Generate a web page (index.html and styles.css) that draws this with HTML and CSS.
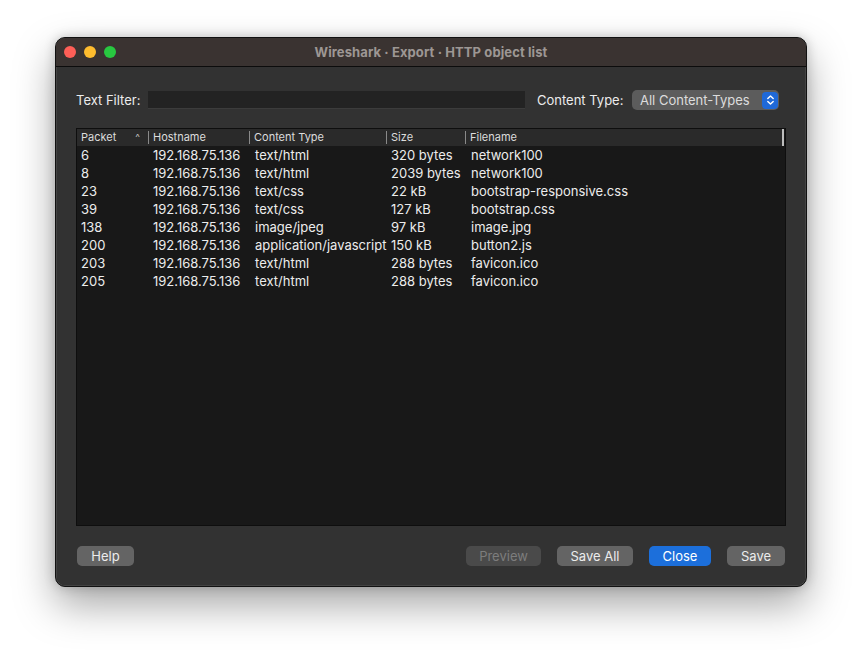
FILE: index.html
```html
<!DOCTYPE html>
<html>
<head>
<meta charset="utf-8">
<link rel="stylesheet" href="styles.css">
</head>
<body>
<div class="window">
  <div class="titlebar">
    <div class="lights">
      <span class="light red"></span>
      <span class="light yellow"></span>
      <span class="light green"></span>
    </div>
    <div class="title">Wireshark · Export · HTTP object list</div>
  </div>
  <div class="content">
    <div class="filters">
      <span class="label tf">Text Filter:</span>
      <div class="input"></div>
      <span class="label ct">Content Type:</span>
      <div class="select">
        <span class="select-text">All Content-Types</span>
        <span class="select-btn">
          <svg width="9" height="12" viewBox="0 0 9 12"><path d="M1.8 4.6 L4.5 1.9 L7.2 4.6 M1.8 7.4 L4.5 10.1 L7.2 7.4" fill="none" stroke="#fff" stroke-width="1.4" stroke-linecap="round" stroke-linejoin="round"/></svg>
        </span>
      </div>
    </div>
    <div class="table">
      <div class="thead">
        <div class="th c1">Packet <span class="sort">^</span></div>
        <div class="th c2">Hostname</div>
        <div class="th c3">Content Type</div>
        <div class="th c4">Size</div>
        <div class="th c5">Filename</div>
      </div>
      <div class="row"><span class="c1">6</span><span class="c2">192.168.75.136</span><span class="c3">text/html</span><span class="c4">320 bytes</span><span class="c5">network100</span></div>
      <div class="row"><span class="c1">8</span><span class="c2">192.168.75.136</span><span class="c3">text/html</span><span class="c4">2039 bytes</span><span class="c5">network100</span></div>
      <div class="row"><span class="c1">23</span><span class="c2">192.168.75.136</span><span class="c3">text/css</span><span class="c4">22 kB</span><span class="c5">bootstrap-responsive.css</span></div>
      <div class="row"><span class="c1">39</span><span class="c2">192.168.75.136</span><span class="c3">text/css</span><span class="c4">127 kB</span><span class="c5">bootstrap.css</span></div>
      <div class="row"><span class="c1">138</span><span class="c2">192.168.75.136</span><span class="c3">image/jpeg</span><span class="c4">97 kB</span><span class="c5">image.jpg</span></div>
      <div class="row"><span class="c1">200</span><span class="c2">192.168.75.136</span><span class="c3">application/javascript</span><span class="c4">150 kB</span><span class="c5">button2.js</span></div>
      <div class="row"><span class="c1">203</span><span class="c2">192.168.75.136</span><span class="c3">text/html</span><span class="c4">288 bytes</span><span class="c5">favicon.ico</span></div>
      <div class="row"><span class="c1">205</span><span class="c2">192.168.75.136</span><span class="c3">text/html</span><span class="c4">288 bytes</span><span class="c5">favicon.ico</span></div>
    </div>
    <div class="buttons">
      <button class="btn help">Help</button>
      <div class="spacer"></div>
      <button class="btn preview" disabled>Preview</button>
      <button class="btn saveall">Save All</button>
      <button class="btn close">Close</button>
      <button class="btn save">Save</button>
    </div>
  </div>
</div>
</body>
</html>
```
FILE: styles.css
```css
* { box-sizing: border-box; }
html, body { margin: 0; padding: 0; }
body {
  background: #ffffff;
  width: 862px;
  height: 660px;
  padding: 37px 0 0 55px;
  font-family: "Inter", "Liberation Sans", sans-serif;
  color: #e6e6e6;
}
.window {
  width: 752px;
  height: 550px;
  border: 1px solid #111;
  border-radius: 10px;
  background: #323232;
  overflow: hidden;
  box-shadow: 0 0 0 0.5px #555 inset, 0 18px 40px rgba(0,0,0,0.35), 0 0 12px rgba(0,0,0,0.2);
  display: flex;
  flex-direction: column;
}
.titlebar {
  height: 29px;
  background: #3a3331;
  border-bottom: 1px solid #0c0c0c;
  display: flex;
  align-items: center;
  position: relative;
}
.lights {
  display: flex;
  gap: 8px;
  padding-left: 8px;
}
.light {
  width: 12px;
  height: 12px;
  border-radius: 50%;
}
.red { background: #fe5f57; }
.yellow { background: #febc2e; }
.green { background: #28c840; }
.title {
  position: absolute;
  left: 0; right: 0; top: 0; bottom: 0;
  display: flex;
  align-items: center;
  justify-content: center;
  font-size: 13px;
  font-weight: 700;
  color: #9d9794;
  letter-spacing: 0.1px;
}
.content {
  flex: 1;
  display: flex;
  flex-direction: column;
  padding: 23px 20px 19px 20px;
}
.filters {
  display: flex;
  align-items: center;
  height: 20px;
  font-size: 13px;
}
.label { color: #ececec; white-space: nowrap; }
.tf { width: 72px; }
.input {
  width: 377px;
  height: 18px;
  background: #232323;
  border-bottom: 1px solid #3c3c3c;
}
.ct { margin-left: 12px; width: 95px; }
.select {
  width: 147px;
  height: 20px;
  border-radius: 5px;
  background: #5c5c5c;
  display: flex;
  align-items: center;
  justify-content: space-between;
  padding: 0 1px 0 8px;
}
.select-text { color: #dcdcdc; }
.select-btn {
  width: 16px;
  height: 17px;
  border-radius: 4px;
  background: #1f69d8;
  display: flex;
  align-items: center;
  justify-content: center;
}
.table {
  margin-top: 18px;
  height: 398px;
  background: #181818;
  border: 1px solid #0e0e0e;
  font-size: 13px;
}
.thead {
  display: flex;
  height: 17px;
  background: #2a2a2a;
  font-size: 11px;
  color: #dcdcdc;
  align-items: center;
  border-right: 2px solid #bdbdbd;
  margin-right: 1px;
}
.th {
  height: 13px;
  line-height: 13px;
  padding-left: 4px;
  border-left: 1px solid #8a8a8a;
  display: flex;
  justify-content: space-between;
  padding-right: 8px;
}
.th.c1 { border-left: none; }
.sort { font-size: 10px; color: #bbb; }
.c1 { width: 71px; }
.c2 { width: 101px; }
.c3 { width: 137px; }
.c4 { width: 79px; }
.c5 { flex: 1; }
.row {
  display: flex;
  height: 18px;
  align-items: center;
  color: #ececec;
}
.row span { white-space: nowrap; }
.row .c1 { padding-left: 4px; }
.row .c2 { padding-left: 5px; }
.row .c3 { padding-left: 6px; }
.row .c4 { padding-left: 5px; }
.row .c5 { padding-left: 6px; }
.buttons {
  display: flex;
  align-items: center;
  margin-top: 20px;
  margin-right: 1px;
  gap: 16px;
}
.spacer { flex: 1; }
.btn {
  height: 20px;
  border: none;
  border-radius: 5px;
  background: #646464;
  color: #ececec;
  font-family: inherit;
  font-size: 13px;
  padding: 0;
}
.help { width: 57px; margin-left: 1px; }
.preview { width: 75px; background: #4a4a4a; color: #7d7d7d; }
.saveall { width: 76px; }
.close { width: 62px; background: #1c6fdb; color: #fff; }
.save { width: 58px; }
```
